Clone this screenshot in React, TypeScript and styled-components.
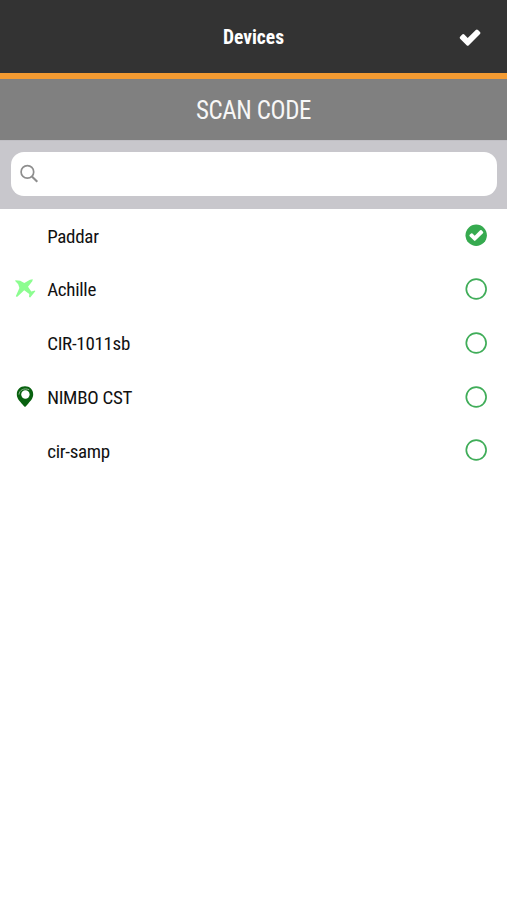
import React from "react";
import styled, { createGlobalStyle } from "styled-components";

const GlobalStyle = createGlobalStyle`
  * { box-sizing: border-box; }
  body {
    margin: 0;
    background: #fff;
    font-family: "Roboto Condensed", Roboto, sans-serif;
    font-stretch: 75%;
  }
`;

const Screen = styled.main`
  display: flex;
  flex-direction: column;
  min-height: 900px;
  background: #fff;
`;

const Header = styled.header`
  display: grid;
  grid-template-columns: 74px 1fr 74px;
  align-items: center;
  height: 79px;
  padding-top: 1px;
  background: #333;
  border-bottom: 6px solid #f49b32;
  color: #fff;
`;

const Title = styled.h1`
  grid-column: 2;
  margin: 0;
  padding-top: 1px;
  text-align: center;
  font-size: 19.5px;
  line-height: 24px;
  font-weight: 700;
`;

const DoneButton = styled.button`
  display: flex;
  justify-content: center;
  padding: 0;
  border: 0;
  background: none;
`;

const ScanButton = styled.button`
  height: 61px;
  padding: 2px 0 0;
  border: 0;
  background: #808080;
  color: #f7f7f7;
  font: inherit;
  font-size: 25px;
  font-weight: 400;
  letter-spacing: -0.4px;
`;

const SearchBar = styled.div`
  height: 68.5px;
  padding: 11px 10px 12px 10.5px;
  background: #c8c7cc;
  border-top: 1px solid #c0bfc4;
`;

const SearchField = styled.label`
  display: flex;
  align-items: center;
  height: 44px;
  padding: 0 10px 0 9px;
  border-radius: 13px;
  background: #fff;
`;

const SearchInput = styled.input`
  flex: 1;
  border: 0;
  outline: 0;
  background: none;
  font: inherit;
`;

const DeviceList = styled.ul`
  margin: 0;
  padding: 0;
  list-style: none;
`;

const DeviceRow = styled.li`
  display: flex;
  align-items: center;
  height: 53.75px;
  padding: 0 19px 0 13px;
`;

const IconSlot = styled.span`
  display: flex;
  width: 34.2px;
  height: 24px;
`;

const DeviceName = styled.span`
  flex: 1;
  padding-top: 2.6px;
  color: #111;
  font-size: 19px;
  letter-spacing: -0.3px;
  line-height: 24px;
`;

const PlaneIcon = () => (
  <svg width="24" height="24" viewBox="0 0 24 24" fill="#8cfd90">
    <path d="M2.4 3.2 7.2 3.8 11.3 5.9 17 2.7 19.8 2.3 19.3 4.2 15 9.8 18.3 14.4 22 13.4 22.3 14.3 17.2 20.5 16 20.1 16.3 17 11.2 13.2 4 20 2.8 19.2 6.4 11 5.2 7.3 2.2 4.1Z" />
  </svg>
);

const PinIcon = () => (
  <svg width="24" height="24" viewBox="0 0 24 24">
    <path fill="#08610f" d="M12 1.3c-4.8 0-8.2 3.5-8.2 8 0 4.6 3.2 7.2 5.5 9.9l1.8 2.1c.7.7 1.1.7 1.8 0l1.8-2.1c2.3-2.7 5.5-5.3 5.5-9.9 0-4.5-3.4-8-8.2-8Z" />
    <circle cx="12.4" cy="9.5" r="4.2" fill="#fff" />
    <path d="M6 9.2C6.4 5 10.8 2.7 15.8 4.5" fill="none" stroke="#8db78f" strokeWidth="1" strokeLinecap="round" />
  </svg>
);

const SearchIcon = () => (
  <svg width="20" height="20" viewBox="0 0 20 20" fill="none" stroke="#8e8e8e">
    <circle cx="7.4" cy="7.9" r="6.3" strokeWidth="1.7" />
    <path d="m11.9 12.4 5.4 5.3" strokeWidth="2.1" />
  </svg>
);

const CHECK =
  "M1.1 10.7 3.2 8.6Q4.2 7.6 5.3 8.6L8.7 12 16.8 3.9Q17.9 2.9 19 3.9L21 5.9Q22 7 21 8.1L9.8 19.2Q8.7 20.2 7.6 19.2L1.1 12.8Q.2 11.8 1.1 10.7Z";

const Radio = ({ checked }: { checked: boolean }) => (
  <svg width="24" height="24" viewBox="0 0 24 24" role="radio" aria-checked={checked}>
    {checked ? (
      <>
        <circle cx="12.2" cy="12.3" r="10.7" fill="#36aa4f" />
        <path d={CHECK} fill="#fff" transform="translate(4.9 4.7) scale(.67)" />
      </>
    ) : (
      <circle cx="12.2" cy="12" r="9.9" fill="none" stroke="#40ad59" strokeWidth="1.7" />
    )}
  </svg>
);

const devices: { name: string; icon?: React.ReactNode; checked?: boolean }[] = [
  { name: "Paddar", checked: true },
  { name: "Achille", icon: <PlaneIcon /> },
  { name: "CIR-1011sb" },
  { name: "NIMBO CST", icon: <PinIcon /> },
  { name: "cir-samp" },
];

export default function App() {
  return (
    <Screen>
      <GlobalStyle />
      <Header>
        <Title>Devices</Title>
        <DoneButton aria-label="Done">
          <svg width="22" height="22" viewBox="0 0 22 22">
            <path d={CHECK} fill="#fff" />
          </svg>
        </DoneButton>
      </Header>
      <ScanButton>SCAN CODE</ScanButton>
      <SearchBar>
        <SearchField>
          <SearchIcon />
          <SearchInput aria-label="Search" />
        </SearchField>
      </SearchBar>
      <DeviceList>
        {devices.map((device) => (
          <DeviceRow key={device.name}>
            <IconSlot>{device.icon}</IconSlot>
            <DeviceName>{device.name}</DeviceName>
            <Radio checked={!!device.checked} />
          </DeviceRow>
        ))}
      </DeviceList>
    </Screen>
  );
}
